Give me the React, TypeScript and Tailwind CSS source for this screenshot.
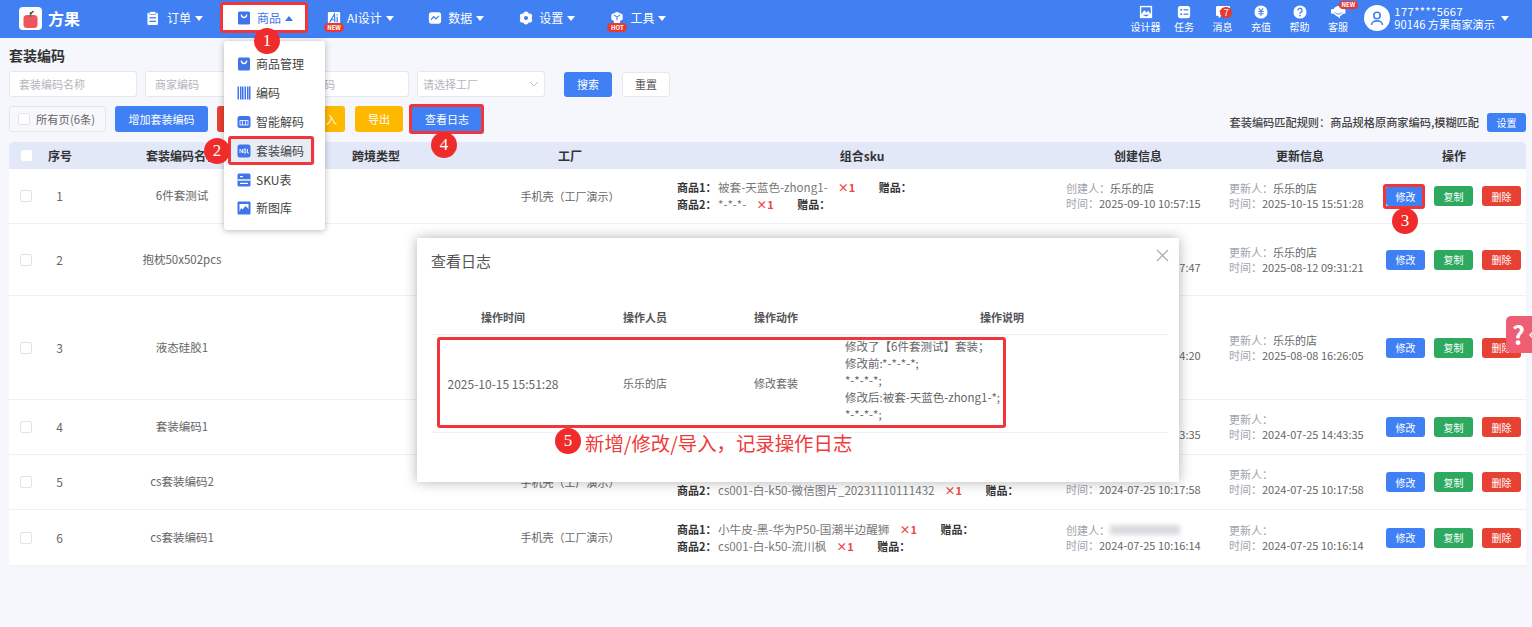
import React from "react";

// top bar icons
const ClipboardIcon = () => (
  <svg width="14" height="14" viewBox="0 0 16 16">
    <rect x="0.5" y="2" width="12" height="14" rx="1.5" fill="#fff" />
    <rect x="3" y="0.5" width="7" height="3.5" rx="1" fill="#fff" stroke="#4080f2" strokeWidth="0.8" />
    <rect x="2.8" y="7" width="7.5" height="1.5" fill="#4080f2" />
    <rect x="2.8" y="11" width="7.5" height="1.5" fill="#4080f2" />
  </svg>
);

const BagIcon = () => (
  <svg width="14" height="14" viewBox="0 0 14 14">
    <rect x="1" y="0.5" width="12" height="13" rx="1.5" fill="#3f74ea" />
    <path d="M4.3 3.5 C4.5 7.5 9.5 7.5 9.7 3.5" fill="none" stroke="#fff" strokeWidth="1.3" />
  </svg>
);

const AiIcon = () => (
  <svg width="14" height="14" viewBox="0 0 16 16">
    <rect x="1" y="1" width="14" height="14" rx="1.5" fill="#fff" />
    <path d="M3 13 L8.5 3.5 L9 13 M5 10 H9" fill="none" stroke="#4080f2" strokeWidth="1.4" />
    <path d="M11.6 6.5 V13 M11.6 3.6 V5" stroke="#4080f2" strokeWidth="1.4" />
  </svg>
);

const ChartIcon = () => (
  <svg width="14" height="14" viewBox="0 0 16 16">
    <rect x="1" y="1.5" width="14" height="13" rx="3" fill="#fff" />
    <path d="M3.5 10 L6.5 6.5 L9 9 L12.5 5.5" fill="none" stroke="#4080f2" strokeWidth="1.4" />
  </svg>
);

const GearIcon = () => (
  <svg width="14" height="14" viewBox="0 0 16 16">
    <circle cx="8" cy="3.6" r="3" fill="#fff" />
    <circle cx="8" cy="12.4" r="3" fill="#fff" />
    <circle cx="4" cy="5.8" r="3" fill="#fff" />
    <circle cx="12" cy="5.8" r="3" fill="#fff" />
    <circle cx="4" cy="10.2" r="3" fill="#fff" />
    <circle cx="12" cy="10.2" r="3" fill="#fff" />
    <circle cx="8" cy="8" r="2.3" fill="#4080f2" />
  </svg>
);

const ToolIcon = () => (
  <svg width="14" height="14" viewBox="0 0 16 16">
    <path d="M8 0.8 L14.5 4 V8.5 C14.5 10 13 11 11.5 11 V15 H4.5 V11 C3 11 1.5 10 1.5 8.5 V4 Z" fill="#fff" />
    <path d="M4.6 4.4 L8 7 L11.4 4.4 M8 7 V10.5" fill="none" stroke="#4080f2" strokeWidth="1.3" />
  </svg>
);

const PictureIcon = () => (
  <svg width="14" height="14" viewBox="0 0 16 16">
    <rect x="1" y="1" width="14" height="14" fill="#fff" />
    <rect x="2.6" y="2.6" width="10.8" height="7.5" fill="#4080f2" />
    <path d="M2.6 10.5 L6 6 L8.5 8.5 L10.5 6.5 L13.4 10.5 V13.4 H2.6 Z" fill="#fff" />
    <path d="M4 11 H12 L8 13 Z" fill="#4080f2" />
  </svg>
);

const TaskIcon = () => (
  <svg width="14" height="14" viewBox="0 0 16 16">
    <rect x="1" y="1" width="14" height="14" rx="3" fill="#fff" />
    <circle cx="4.8" cy="5.5" r="1.2" fill="#4080f2" />
    <circle cx="4.8" cy="10.5" r="1.2" fill="#4080f2" />
    <rect x="7.5" y="4.8" width="5.5" height="1.4" fill="#4080f2" />
    <rect x="7.5" y="9.8" width="5.5" height="1.4" fill="#4080f2" />
  </svg>
);

const MessageIcon = () => (
  <svg width="16" height="14" viewBox="0 0 18 16">
    <path d="M2.5 1 H15.5 A1.5 1.5 0 0 1 17 2.5 V11 A1.5 1.5 0 0 1 15.5 12.5 H7 L4 15 V12.5 H2.5 A1.5 1.5 0 0 1 1 11 V2.5 A1.5 1.5 0 0 1 2.5 1 Z" fill="#fff" />
    <circle cx="6" cy="7" r="1" fill="#4080f2" />
  </svg>
);

const CoinIcon = () => (
  <svg width="14" height="14" viewBox="0 0 16 16">
    <circle cx="8" cy="8" r="7.5" fill="#fff" />
    <path d="M5.5 3.8 L8 7 L10.5 3.8 M5 7.5 H11 M5 10 H11 M8 7 V12.5" fill="none" stroke="#4080f2" strokeWidth="1.2" />
  </svg>
);

const HelpIcon = () => (
  <svg width="14" height="14" viewBox="0 0 16 16">
    <circle cx="8" cy="8" r="7.5" fill="#fff" />
    <path d="M5.6 6.2 A2.4 2.4 0 1 1 9.2 8.2 C8.4 8.7 8 9 8 10" fill="none" stroke="#4080f2" strokeWidth="1.5" />
    <circle cx="8" cy="12" r="1" fill="#4080f2" />
  </svg>
);

const HeadsetIcon = () => (
  <svg width="16" height="14" viewBox="0 0 18 16">
    <circle cx="9.5" cy="7" r="6" fill="#fff" />
    <rect x="1" y="4.5" width="4" height="5.5" rx="1.5" fill="#fff" />
    <rect x="14" y="4.5" width="3.5" height="5.5" rx="1.5" fill="#fff" />
    <path d="M5.5 8.5 C7 11 12 11 13.5 8.5" fill="none" stroke="#4080f2" strokeWidth="1.1" />
    <path d="M7 12 L11.5 15.5 L11 12 Z" fill="#fff" />
  </svg>
);

const Caret = ({ up = false, color = "#fff" }: { up?: boolean; color?: string }) => (
  <svg width="8" height="5" viewBox="0 0 8 5" className="shrink-0">
    <path d={up ? "M4 0 L8 5 H0 Z" : "M0 0 H8 L4 5 Z"} fill={color} />
  </svg>
);

// dropdown menu icons
const BarcodeIcon = () => (
  <svg width="14" height="14" viewBox="0 0 14 14">
    {[0.5, 3, 5, 7.5, 10, 12].map((x) => (
      <rect key={x} x={x} y="0.5" width="1.5" height="13" fill="#3f74ea" />
    ))}
  </svg>
);

const DecodeIcon = () => (
  <svg width="14" height="14" viewBox="0 0 14 14">
    <rect x="0.5" y="1" width="13" height="12" rx="2.5" fill="#3f74ea" />
    <rect x="3" y="5.5" width="8" height="4.5" fill="none" stroke="#fff" strokeWidth="0.8" />
    <path d="M5.5 5.5 V10 M8.5 5.5 V10" stroke="#fff" strokeWidth="0.8" />
  </svg>
);

const NoIcon = () => (
  <svg width="14" height="14" viewBox="0 0 14 14">
    <rect x="0.5" y="0.5" width="13" height="13" rx="2.5" fill="#3f74ea" />
    <path d="M3 9 V5 L5.5 9 V5 M7 5 H8.8 V9 H7 Z M10.5 5 V9 H12" fill="none" stroke="#fff" strokeWidth="0.8" />
  </svg>
);

const SkuIcon = () => (
  <svg width="14" height="14" viewBox="0 0 14 14">
    <rect x="0.5" y="0.5" width="13" height="13" rx="1.5" fill="#3f74ea" />
    <rect x="0.5" y="6.3" width="13" height="1.4" fill="#fff" />
    <rect x="3" y="3" width="3" height="1.2" fill="#fff" />
    <rect x="3" y="9.8" width="8" height="1.2" fill="#fff" />
  </svg>
);

const GalleryIcon = () => (
  <svg width="14" height="14" viewBox="0 0 14 14">
    <rect x="0.5" y="0.5" width="13" height="13" rx="1" fill="#3f74ea" />
    <path d="M2.5 11 V3 H11.5 V8 L8.5 5 L5.5 8.5 L4 7 Z" fill="#fff" />
  </svg>
);

const navItems = [
  { label: "订单", icon: <ClipboardIcon />, nudge: "" },
  { label: "商品", icon: <BagIcon />, active: true, nudge: "" },
  { label: "AI设计", icon: <AiIcon />, badge: "NEW", nudge: "" },
  { label: "数据", icon: <ChartIcon />, nudge: "ml-[0.5px]" },
  { label: "设置", icon: <GearIcon />, nudge: "ml-[1px]" },
  { label: "工具", icon: <ToolIcon />, badge: "HOT", nudge: "ml-[1px]" },
];

const topActions = [
  { label: "设计器", icon: <PictureIcon /> },
  { label: "任务", icon: <TaskIcon /> },
  { label: "消息", icon: <MessageIcon />, count: "7" },
  { label: "充值", icon: <CoinIcon /> },
  { label: "帮助", icon: <HelpIcon /> },
  { label: "客服", icon: <HeadsetIcon />, tag: "NEW" },
];

const menuItems = [
  { label: "商品管理", icon: <BagIcon /> },
  { label: "编码", icon: <BarcodeIcon /> },
  { label: "智能解码", icon: <DecodeIcon /> },
  { label: "套装编码", icon: <NoIcon />, selected: true },
  { label: "SKU表", icon: <SkuIcon /> },
  { label: "新图库", icon: <GalleryIcon /> },
];

type SkuLine = { no: number; name: string; qty: string };

type Row = {
  id: number;
  name: string;
  height: string;
  factory: string;
  sku: SkuLine[];
  creator: string;
  createdAt: string;
  updater: string;
  updatedAt: string;
  blurred?: boolean;
};

const rows: Row[] = [
  {
    id: 1,
    name: "6件套测试",
    height: "h-[55px]",
    factory: "手机壳（工厂演示）",
    sku: [
      { no: 1, name: "被套-天蓝色-zhong1-", qty: "×1" },
      { no: 2, name: "*-*-*-", qty: "×1" },
    ],
    creator: "乐乐的店",
    createdAt: "2025-09-10 10:57:15",
    updater: "乐乐的店",
    updatedAt: "2025-10-15 15:51:28",
  },
  {
    id: 2,
    name: "抱枕50x502pcs",
    height: "h-[72px]",
    factory: "",
    sku: [],
    creator: "乐乐的店",
    createdAt: "2025-08-12 09:27:47",
    updater: "乐乐的店",
    updatedAt: "2025-08-12 09:31:21",
  },
  {
    id: 3,
    name: "液态硅胶1",
    height: "h-[104px]",
    factory: "",
    sku: [],
    creator: "乐乐的店",
    createdAt: "2025-08-08 16:24:20",
    updater: "乐乐的店",
    updatedAt: "2025-08-08 16:26:05",
  },
  {
    id: 4,
    name: "套装编码1",
    height: "h-[55px]",
    factory: "",
    sku: [],
    creator: "",
    createdAt: "2024-07-25 14:43:35",
    updater: "",
    updatedAt: "2024-07-25 14:43:35",
  },
  {
    id: 5,
    name: "cs套装编码2",
    height: "h-[55px]",
    factory: "手机壳（工厂演示）",
    sku: [
      { no: 1, name: "cs001-白-k50-微信图片", qty: "×1" },
      { no: 2, name: "cs001-白-k50-微信图片_20231110111432", qty: "×1" },
    ],
    creator: "",
    createdAt: "2024-07-25 10:17:58",
    updater: "",
    updatedAt: "2024-07-25 10:17:58",
  },
  {
    id: 6,
    name: "cs套装编码1",
    height: "h-[56px]",
    factory: "手机壳（工厂演示）",
    sku: [
      { no: 1, name: "小牛皮-黑-华为P50-国潮半边醒狮", qty: "×1" },
      { no: 2, name: "cs001-白-k50-流川枫", qty: "×1" },
    ],
    creator: "",
    createdAt: "2024-07-25 10:16:14",
    updater: "",
    updatedAt: "2024-07-25 10:16:14",
    blurred: true,
  },
];

const headers = [
  { label: "序号", className: "pl-[2px]" },
  { label: "套装编码名称", className: "" },
  { label: "跨境类型", className: "" },
  { label: "工厂", className: "" },
  { label: "组合sku", className: "" },
  { label: "创建信息", className: "pl-[10px]" },
  { label: "更新信息", className: "pl-[8px]" },
  { label: "操作", className: "pl-[6px]" },
];

const gridCols = "grid grid-cols-[31px_38px_208px_180px_208px_376px_166px_160px_150px] items-center";

const Checkbox = ({ className = "w-[12px] h-[12px] border border-[#e2e4ea] bg-white" }: { className?: string }) => (
  <span className={`block rounded-[2px] ${className}`} />
);

const FilterInput = ({ text }: { text: string }) => (
  <div className="w-[128px] h-[26px] flex items-center px-[9px] bg-white border border-[#e6e8ee] rounded-[3px] text-[11px] text-[#b3b6bd]">
    {text}
  </div>
);

const ActionButton = ({ label, color }: { label: string; color: string }) => (
  <button className={`w-[39px] h-[20px] rounded-[3px] text-[10px] text-white ${color}`}>{label}</button>
);

// red outline drawn over the screenshot
const Mark = ({ className }: { className: string }) => (
  <div className={`absolute border-[3px] border-[#f0353b] rounded-[3px] pointer-events-none ${className}`} />
);

const Step = ({ n, className }: { n: number; className: string }) => (
  <div
    className={`absolute w-[26px] h-[26px] rounded-full bg-[#f02b2b] text-white flex items-center justify-center text-[17px] font-['Liberation_Serif',serif] ${className}`}
  >
    {n}
  </div>
);

const Person = ({ label, name, time, blurred }: { label: string; name: string; time: string; blurred?: boolean }) => (
  <div className="text-[11px] leading-[15px] text-[#666] whitespace-nowrap">
    <div className="flex items-center">
      <span className="text-[#a0a3aa]">{label}：</span>
      {blurred ? <span className="w-[70px] h-[10px] bg-[#d9dbe0] blur-[2px]" /> : name}
    </div>
    <div>
      <span className="text-[#a0a3aa]">时间：</span>
      {time}
    </div>
  </div>
);

const Header = () => (
  <header className="h-[38px] bg-[#4080f2] flex items-center pl-[19px] pr-[23px] pb-[2px] text-white">
    <div className="w-[128px] shrink-0 flex items-center gap-[6px]">
      <div className="w-[23px] h-[23px] rounded-[4px] bg-white flex items-center justify-center">
        <svg width="15" height="19" viewBox="0 0 15 19">
          <rect x="0.5" y="6" width="14" height="13" rx="3.5" fill="#ee5560" />
          <path d="M7.5 8 V3" stroke="#2d8a4e" strokeWidth="1.6" />
          <path d="M7.5 5 L10.5 2" stroke="#3a3a3a" strokeWidth="1.1" />
        </svg>
      </div>
      <span className="text-[16px] font-bold">方果</span>
    </div>

    <nav className="flex items-center gap-[34px] text-[12px]">
      {navItems.map((item) => (
        <div key={item.label} className={`relative flex items-center gap-[4px] ${item.nudge}`}>
          {item.active && (
            <div className="absolute left-[-17px] right-[-15px] top-[-7px] bottom-[-6px] bg-white border-[3px] border-[#f0353b] rounded-[3px]" />
          )}
          <span className="relative w-[16px] flex">{item.icon}</span>
          <span className={`relative ${item.active ? "text-[#3f74ea]" : ""}`}>{item.label}</span>
          <span className="relative">
            <Caret up={item.active} color={item.active ? "#3f74ea" : "#fff"} />
          </span>
          {item.badge && (
            <span className="absolute left-[-3px] top-[14px] w-[20px] h-[9px] rounded-full bg-[#e8392f] text-[6px] leading-[9px] text-center font-bold">
              {item.badge}
            </span>
          )}
        </div>
      ))}
    </nav>

    <div className="ml-auto flex items-center">
      {topActions.map((item) => (
        <div key={item.label} className="relative w-[38.5px] flex flex-col items-center text-[10px] leading-[13px]">
          <span className="h-[16px] flex items-center">{item.icon}</span>
          <span>{item.label}</span>
          {item.count && (
            <span className="absolute left-[17px] top-[3px] w-[12px] h-[11px] rounded-full bg-[#e8392f] text-[9px] leading-[11px] text-center">
              {item.count}
            </span>
          )}
          {item.tag && (
            <span className="absolute left-[20px] top-[-3px] w-[19px] h-[8px] rounded-full bg-[#e8392f] text-[6px] leading-[8px] text-center font-bold">
              {item.tag}
            </span>
          )}
        </div>
      ))}
      <div className="ml-[7px] w-[26px] h-[26px] rounded-full bg-white flex items-center justify-center">
        <svg width="14" height="15" viewBox="0 0 14 15">
          <circle cx="7" cy="4.5" r="3.2" fill="none" stroke="#4080f2" strokeWidth="1.6" />
          <path d="M1.5 14 C1.5 8.5 12.5 8.5 12.5 14" fill="none" stroke="#4080f2" strokeWidth="1.6" />
        </svg>
      </div>
      <div className="ml-[4px] text-[11.2px] leading-[13px] whitespace-nowrap">
        <div className="tracking-[0.4px]">177****5667</div>
        <div>90146 方果商家演示</div>
      </div>
      <span className="ml-[6px]">
        <Caret />
      </span>
    </div>
  </header>
);

const LogTable = () => (
  <div className="text-[11px] text-[#666]">
    <div className="grid grid-cols-[142px_142px_120px_332px] h-[35px] items-center text-center font-bold text-[#555] border-b border-[#eef1f7]">
      <span>操作时间</span>
      <span>操作人员</span>
      <span>操作动作</span>
      <span>操作说明</span>
    </div>
    <div className="grid grid-cols-[142px_142px_120px_332px] h-[98px] items-center text-center border-b border-[#eef1f7]">
      <span className="text-[12px]">2025-10-15 15:51:28</span>
      <span>乐乐的店</span>
      <span>修改套装</span>
      <div className="pl-[9px] pb-[6px] text-left text-[11.5px] leading-[17px] whitespace-nowrap">
        <div>修改了【6件套测试】套装；</div>
        <div>修改前:*-*-*-*;</div>
        <div>*-*-*-*;</div>
        <div>修改后:被套-天蓝色-zhong1-*;</div>
        <div>*-*-*-*;</div>
      </div>
    </div>
  </div>
);

export default function App() {
  return (
    <div className="relative h-screen overflow-hidden bg-[#f5f7fc] font-['Noto_Sans_CJK_SC','Noto_Sans',sans-serif] text-[#333]">
      <Header />

      <main className="pl-[9px] pr-[6px]">
        <h1 className="mt-[7px] h-[20px] leading-[20px] text-[14px] font-bold text-[#333]">套装编码</h1>

        <div className="mt-[6px] flex items-center gap-[8px]">
          <FilterInput text="套装编码名称" />
          <FilterInput text="商家编码" />
          <FilterInput text="商品编码" />
          <div className="w-[128px] h-[26px] flex items-center justify-between px-[5px] bg-white border border-[#e6e8ee] rounded-[3px] text-[11px] text-[#b3b6bd]">
            请选择工厂
            <svg width="10" height="6" viewBox="0 0 10 6">
              <path d="M1 1 L5 5 L9 1" fill="none" stroke="#c4c7cf" strokeWidth="1" />
            </svg>
          </div>
          <button className="ml-[11px] w-[48px] h-[25px] rounded-[3px] bg-[#4080f5] text-white text-[11px]">搜索</button>
          <button className="ml-[2px] w-[48px] h-[25px] rounded-[3px] bg-white border border-[#e6e8ee] text-[#555] text-[11px]">重置</button>
        </div>

        <div className="mt-[9px] h-[26px] flex items-center text-[11px]">
          <div className="w-[97px] h-[26px] flex items-center gap-[6px] pl-[8px] bg-[#f7f8fb] border border-[#e3e5eb] rounded-[3px] text-[11.3px] text-[#666]">
            <Checkbox />
            所有页(6条)
          </div>
          <button className="ml-[9px] w-[93px] h-[26px] rounded-[3px] bg-[#4080f5] text-white">增加套装编码</button>
          <button className="ml-[9px] w-[58px] h-[26px] rounded-[3px] bg-[#e74133] text-white">删除</button>
          <button className="ml-[8px] w-[62px] h-[26px] rounded-[3px] bg-[#ffb800] text-white pl-[24px]">导入</button>
          <button className="ml-[10px] w-[48px] h-[26px] rounded-[3px] bg-[#ffb800] text-white">导出</button>
          <button className="ml-[8px] w-[72px] h-[26px] rounded-[3px] bg-[#4080f5] text-white">查看日志</button>
          <div className="ml-auto flex items-center gap-[8px] self-end">
            <span className="text-[11.2px] font-medium text-[#444]">套装编码匹配规则：商品规格原商家编码,模糊匹配</span>
            <button className="w-[39px] h-[19px] rounded-[3px] bg-[#4080f5] text-white text-[10px]">设置</button>
          </div>
        </div>

        <div className="mt-[10px]">
          <div className={`${gridCols} h-[27px] bg-[#e2e8f7] rounded-t-[5px] text-[12px] font-bold text-[#333] text-center`}>
            <span className="pl-[12px]">
              <Checkbox className="w-[11px] h-[11px] bg-white" />
            </span>
            {headers.map((h) => (
              <span key={h.label} className={`whitespace-nowrap ${h.className}`}>
                {h.label}
              </span>
            ))}
          </div>

          {rows.map((row) => (
            <div key={row.id} className={`${gridCols} ${row.height} bg-white border-b border-[#edf0f6] text-[11px] text-[#666]`}>
              <span className="pl-[11px]">
                <Checkbox />
              </span>
              <span className="pl-[1px] text-center text-[12px]">{row.id}</span>
              <span className="text-center text-[11.5px]">{row.name}</span>
              <span />
              <span className="text-center whitespace-nowrap">{row.factory}</span>
              <div className="pl-[3px] leading-[17px] whitespace-nowrap">
                {row.sku.map((s) => (
                  <div key={s.no} className="flex items-center">
                    <span className="w-[41px] font-bold text-[#333]">商品{s.no}：</span>
                    <span className="text-[11.6px] text-[#777]">{s.name}</span>
                    <span className="ml-[10px] w-[15px] text-[11px] text-[#f04545] font-bold">{s.qty}</span>
                    <span className="ml-[26px] font-bold text-[#333]">赠品：</span>
                  </div>
                ))}
              </div>
              <div className="pl-[16px]">
                <Person label="创建人" name={row.creator} time={row.createdAt} blurred={row.blurred} />
              </div>
              <div className="pl-[13px]">
                <Person label="更新人" name={row.updater} time={row.updatedAt} />
              </div>
              <div className="pl-[10px] flex items-center gap-[9px]">
                <ActionButton label="修改" color="bg-[#4080f5]" />
                <ActionButton label="复制" color="bg-[#2eaa60]" />
                <ActionButton label="删除" color="bg-[#e74133]" />
              </div>
            </div>
          ))}
        </div>
      </main>

      {/* 商品 dropdown */}
      <div className="absolute left-[224px] top-[41px] w-[101px] h-[189px] bg-white rounded-[3px] shadow-[0_1px_6px_rgba(0,0,0,0.28)] pt-[9px] text-[12px] text-[#444]">
        {menuItems.map((item) => (
          <div key={item.label} className="relative h-[28.8px] flex items-center gap-[5px] pl-[13px]">
            {item.selected && <div className="absolute left-[5px] right-[10px] inset-y-0 bg-[#e8ecf5]" />}
            <span className="relative flex">{item.icon}</span>
            <span className="relative">{item.label}</span>
          </div>
        ))}
      </div>

      {/* 查看日志 dialog */}
      <div className="absolute left-[417px] top-[238px] w-[762px] h-[244px] bg-white shadow-[0_0_12px_rgba(0,0,0,0.3)] pl-[15px] pr-[11px]">
        <div className="flex items-start justify-between h-[62px] pt-[12px]">
          <span className="ml-[-1px] text-[15px] text-[#555]">查看日志</span>
          <svg width="13" height="13" viewBox="0 0 13 13" className="mt-[-1px] mr-[-1px]">
            <path d="M1 1 L12 12 M12 1 L1 12" stroke="#a8abb2" strokeWidth="1.2" />
          </svg>
        </div>
        <LogTable />
      </div>

      {/* help tab on the right edge */}
      <div className="absolute left-[1506px] top-[316px] w-[26px] h-[37px] bg-[#ef5f74] rounded-l-[5px] flex items-center pl-[6px] text-white text-[25px] font-bold overflow-hidden">
        ?
        <svg width="4" height="8" viewBox="0 0 4 8" className="ml-[4px] shrink-0">
          <path d="M4 1 L1 4 L4 7" fill="none" stroke="#fff" strokeWidth="1.5" />
        </svg>
      </div>

      <Mark className="left-[228px] top-[136px] w-[86px] h-[29px]" />
      <Mark className="left-[409px] top-[104px] w-[75px] h-[30px]" />
      <Mark className="left-[1383px] top-[184px] w-[42px] h-[25px]" />
      <Mark className="left-[437px] top-[337px] w-[569px] h-[91px]" />

      <Step n={1} className="left-[254px] top-[28px]" />
      <Step n={2} className="left-[204px] top-[138px]" />
      <Step n={3} className="left-[1392px] top-[208px]" />
      <Step n={4} className="left-[431px] top-[132px]" />
      <Step n={5} className="left-[555px] top-[428px]" />

      <div className="absolute left-[585px] top-[429px] text-[19.4px] leading-[28px] text-[#f03a3a] whitespace-nowrap">
        新增/修改/导入，记录操作日志
      </div>
    </div>
  );
}
